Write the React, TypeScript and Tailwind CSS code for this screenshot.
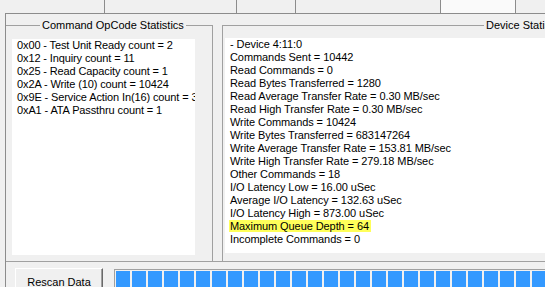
const opcodes = [
  "0x00 - Test Unit Ready count = 2",
  "0x12 - Inquiry count = 11",
  "0x25 - Read Capacity count = 1",
  "0x2A - Write (10) count = 10424",
  "0x9E - Service Action In(16) count = 3",
  "0xA1 - ATA Passthru count = 1",
]

const deviceStats = [
  "- Device 4:11:0",
  "Commands Sent = 10442",
  "Read Commands = 0",
  "Read Bytes Transferred = 1280",
  "Read Average Transfer Rate = 0.30 MB/sec",
  "Read High Transfer Rate = 0.30 MB/sec",
  "Write Commands = 10424",
  "Write Bytes Transferred = 683147264",
  "Write Average Transfer Rate = 153.81 MB/sec",
  "Write High Transfer Rate = 279.18 MB/sec",
  "Other Commands = 18",
  "I/O Latency Low = 16.00 uSec",
  "Average I/O Latency = 132.63 uSec",
  "I/O Latency High = 873.00 uSec",
  "Maximum Queue Depth = 64",
  "Incomplete Commands = 0",
]

const HIGHLIGHT = "Maximum Queue Depth = 64"

export default function App() {
  return (
    <div className="w-[545px] h-[287px] overflow-hidden bg-[#f0f0f0] text-black text-[11px] leading-[13px] font-['Liberation_Sans',Arial,sans-serif]">
      {/* tab strip (labels scrolled out of view) */}
      <div className="flex h-[13px]">
        <div className="w-[105px] shrink-0 border-r border-[#8c8c8c]" />
        <div className="w-[132px] shrink-0 border-r border-[#8c8c8c]" />
        <div className="w-[59px] shrink-0 border-r border-[#8c8c8c]" />
        <div className="w-[145px] shrink-0 border-r border-[#8c8c8c]" />
        <div className="w-[75px] shrink-0 border-r border-[#8c8c8c] bg-[#fafafa]" />
      </div>

      {/* tab page */}
      <div className="ml-[5px] h-[274px] border-l border-t border-[#8c8c8c]">
        <div className="flex h-[248px] overflow-hidden border-b border-[#a0a0a0]">
          {/* Command OpCode Statistics */}
          <fieldset className="mt-[5px] h-[243px] w-[207px] shrink-0 border-t border-r border-[#a0a0a0]">
            <legend className="ml-[34px] px-[2px]">Command OpCode Statistics</legend>
            <div className="ml-[6px] mt-[7px] h-[216px] w-[183px] overflow-hidden whitespace-nowrap bg-white pl-[5px] tracking-[-0.12px]">
              {opcodes.map((line) => (
                <div key={line}>{line}</div>
              ))}
            </div>
          </fieldset>

          {/* Device Statistics */}
          <fieldset className="ml-[9px] mt-[5px] h-[243px] w-[420px] shrink-0 border-t border-l border-[#a0a0a0]">
            <legend className="ml-[261px] px-[2px] whitespace-nowrap">Device Statistics</legend>
            <div className="ml-[2px] mt-[6px] h-[215px] overflow-hidden whitespace-nowrap bg-white pl-[5px] tracking-[-0.08px]">
              {deviceStats.map((line) => (
                <div key={line}>
                  {line === HIGHLIGHT ? (
                    <span className="-ml-px bg-[#ffff5a] pl-px pr-[2px]">{line}</span>
                  ) : (
                    line
                  )}
                </div>
              ))}
            </div>
          </fieldset>
        </div>

        {/* bottom bar */}
        <div className="flex items-start pl-[9px] pt-[6px]">
          <button className="h-[23px] w-[88px] shrink-0 border-t border-l border-white border-r border-b border-r-[#696969] border-b-[#696969] bg-[#f0f0f0] pt-[5px] text-center align-top leading-[13px] shadow-[inset_-1px_-1px_0_#a0a0a0]">
            Rescan Data
          </button>
          <div className="ml-[11px] mt-[1px] flex h-[20px] flex-1 gap-[2px] overflow-hidden border-l border-t border-[#a0a0a0] pl-px pt-px">
            {Array.from({ length: 28 }).map((_, i) => (
              <div key={i} className="h-[19px] w-[14px] shrink-0 bg-[#3399ff]" />
            ))}
          </div>
        </div>
      </div>
    </div>
  )
}
